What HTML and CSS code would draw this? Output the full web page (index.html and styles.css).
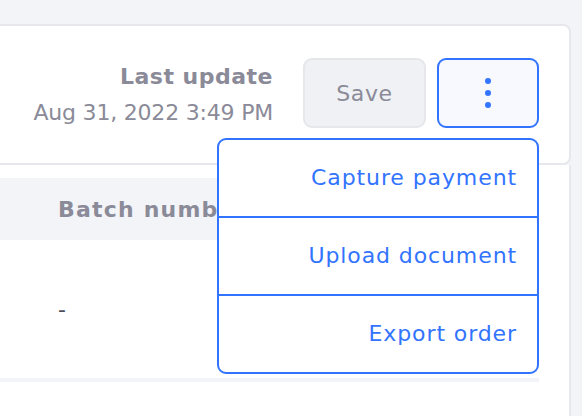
FILE: index.html
```html
<!DOCTYPE html>
<html lang="en">
<head>
    <meta charset="UTF-8">
    <meta name="viewport" content="width=device-width, initial-scale=1.0">
    <title>Order</title>
    <link rel="stylesheet" href="styles.css">
</head>
<body>
    <main class="page">
        <section class="header-card">
            <div class="update-info">
                <div class="update-label">Last update</div>
                <div class="update-date">Aug 31, 2022 3:49 PM</div>
            </div>
            <button class="btn-save" type="button">Save</button>
            <div class="more-wrap">
                <button class="btn-more" type="button" aria-label="More actions">
                    <svg width="8" height="32" viewBox="0 0 8 32">
                        <circle cx="4" cy="4" r="3" fill="currentColor"/>
                        <circle cx="4" cy="16" r="3" fill="currentColor"/>
                        <circle cx="4" cy="28" r="3" fill="currentColor"/>
                    </svg>
                </button>
                <ul class="menu">
                    <li><a href="#">Capture payment</a></li>
                    <li><a href="#">Upload document</a></li>
                    <li><a href="#">Export order</a></li>
                </ul>
            </div>
        </section>
        <section class="panel">
            <table class="items">
                <thead>
                    <tr><th>Batch number</th></tr>
                </thead>
                <tbody>
                    <tr><td>-</td></tr>
                </tbody>
            </table>
        </section>
    </main>
</body>
</html>
```

FILE: styles.css
```css
:root {
    --text-muted: #8a8a98;
    --accent-color: #3274ff;
    --border-color: #e7e8ec;
    --page-background: #f3f4f8;
}

* {
    box-sizing: border-box;
}

body {
    margin: 0;
    font-family: "DejaVu Sans", sans-serif;
    background: var(--page-background);
    color: #4a4d55;
}

.page {
    padding-top: 24px;
    margin-right: 11px;
}

.header-card {
    display: flex;
    justify-content: flex-end;
    align-items: center;
    background: #ffffff;
    border: 2px solid var(--border-color);
    border-left: none;
    border-radius: 0 8px 8px 0;
    padding: 32px 30px 35px 0;
}

/* text block is a bit taller than the buttons, keep it from growing the card */
.update-info {
    text-align: right;
    margin: 1px 30px -3px 0;
    color: var(--text-muted);
    font-size: 22px;
}

.update-label {
    font-weight: 600;
    line-height: 36px;
    letter-spacing: 0.5px;
}

.update-date {
    line-height: 36px;
    letter-spacing: -0.2px;
}

.btn-save {
    width: 123px;
    height: 70px;
    font-family: inherit;
    font-size: 22px;
    letter-spacing: 0.6px;
    color: var(--text-muted);
    background: #f0f1f4;
    border: 2px solid #e6e7eb;
    border-radius: 9px;
}

.more-wrap {
    position: relative;
    margin-left: 11px;
}

.btn-more {
    display: flex;
    align-items: center;
    justify-content: center;
    width: 102px;
    height: 70px;
    color: var(--accent-color);
    background: #f7f9ff;
    border: 2px solid var(--accent-color);
    border-radius: 9px;
}

.menu {
    position: absolute;
    top: 80px;
    right: 0;
    width: 322px;
    margin: 0;
    padding: 0;
    list-style: none;
    background: #ffffff;
    border: 2px solid var(--accent-color);
    border-radius: 9px;
    z-index: 10;
}

.menu li + li {
    border-top: 2px solid var(--accent-color);
}

.menu a {
    display: block;
    height: 76px;
    line-height: 76px;
    padding-right: 20px;
    text-align: right;
    font-size: 22px;
    letter-spacing: 0.9px;
    color: var(--accent-color);
    text-decoration: none;
}

.panel {
    height: 251px;
    background: #ffffff;
    border-right: 2px solid var(--border-color);
    padding: 13px 30px 0 0;
}

.items {
    width: 100%;
    border-collapse: collapse;
    border-bottom: 4px solid var(--page-background);
}

.items th {
    height: 62px;
    padding: 0 0 0 58px;
    text-align: left;
    font-size: 22px;
    font-weight: 600;
    letter-spacing: 1.2px;
    color: var(--text-muted);
    background: var(--page-background);
    white-space: nowrap;
}

.items td {
    height: 140px;
    padding: 0 0 0 58px;
    font-size: 22px;
}
```
